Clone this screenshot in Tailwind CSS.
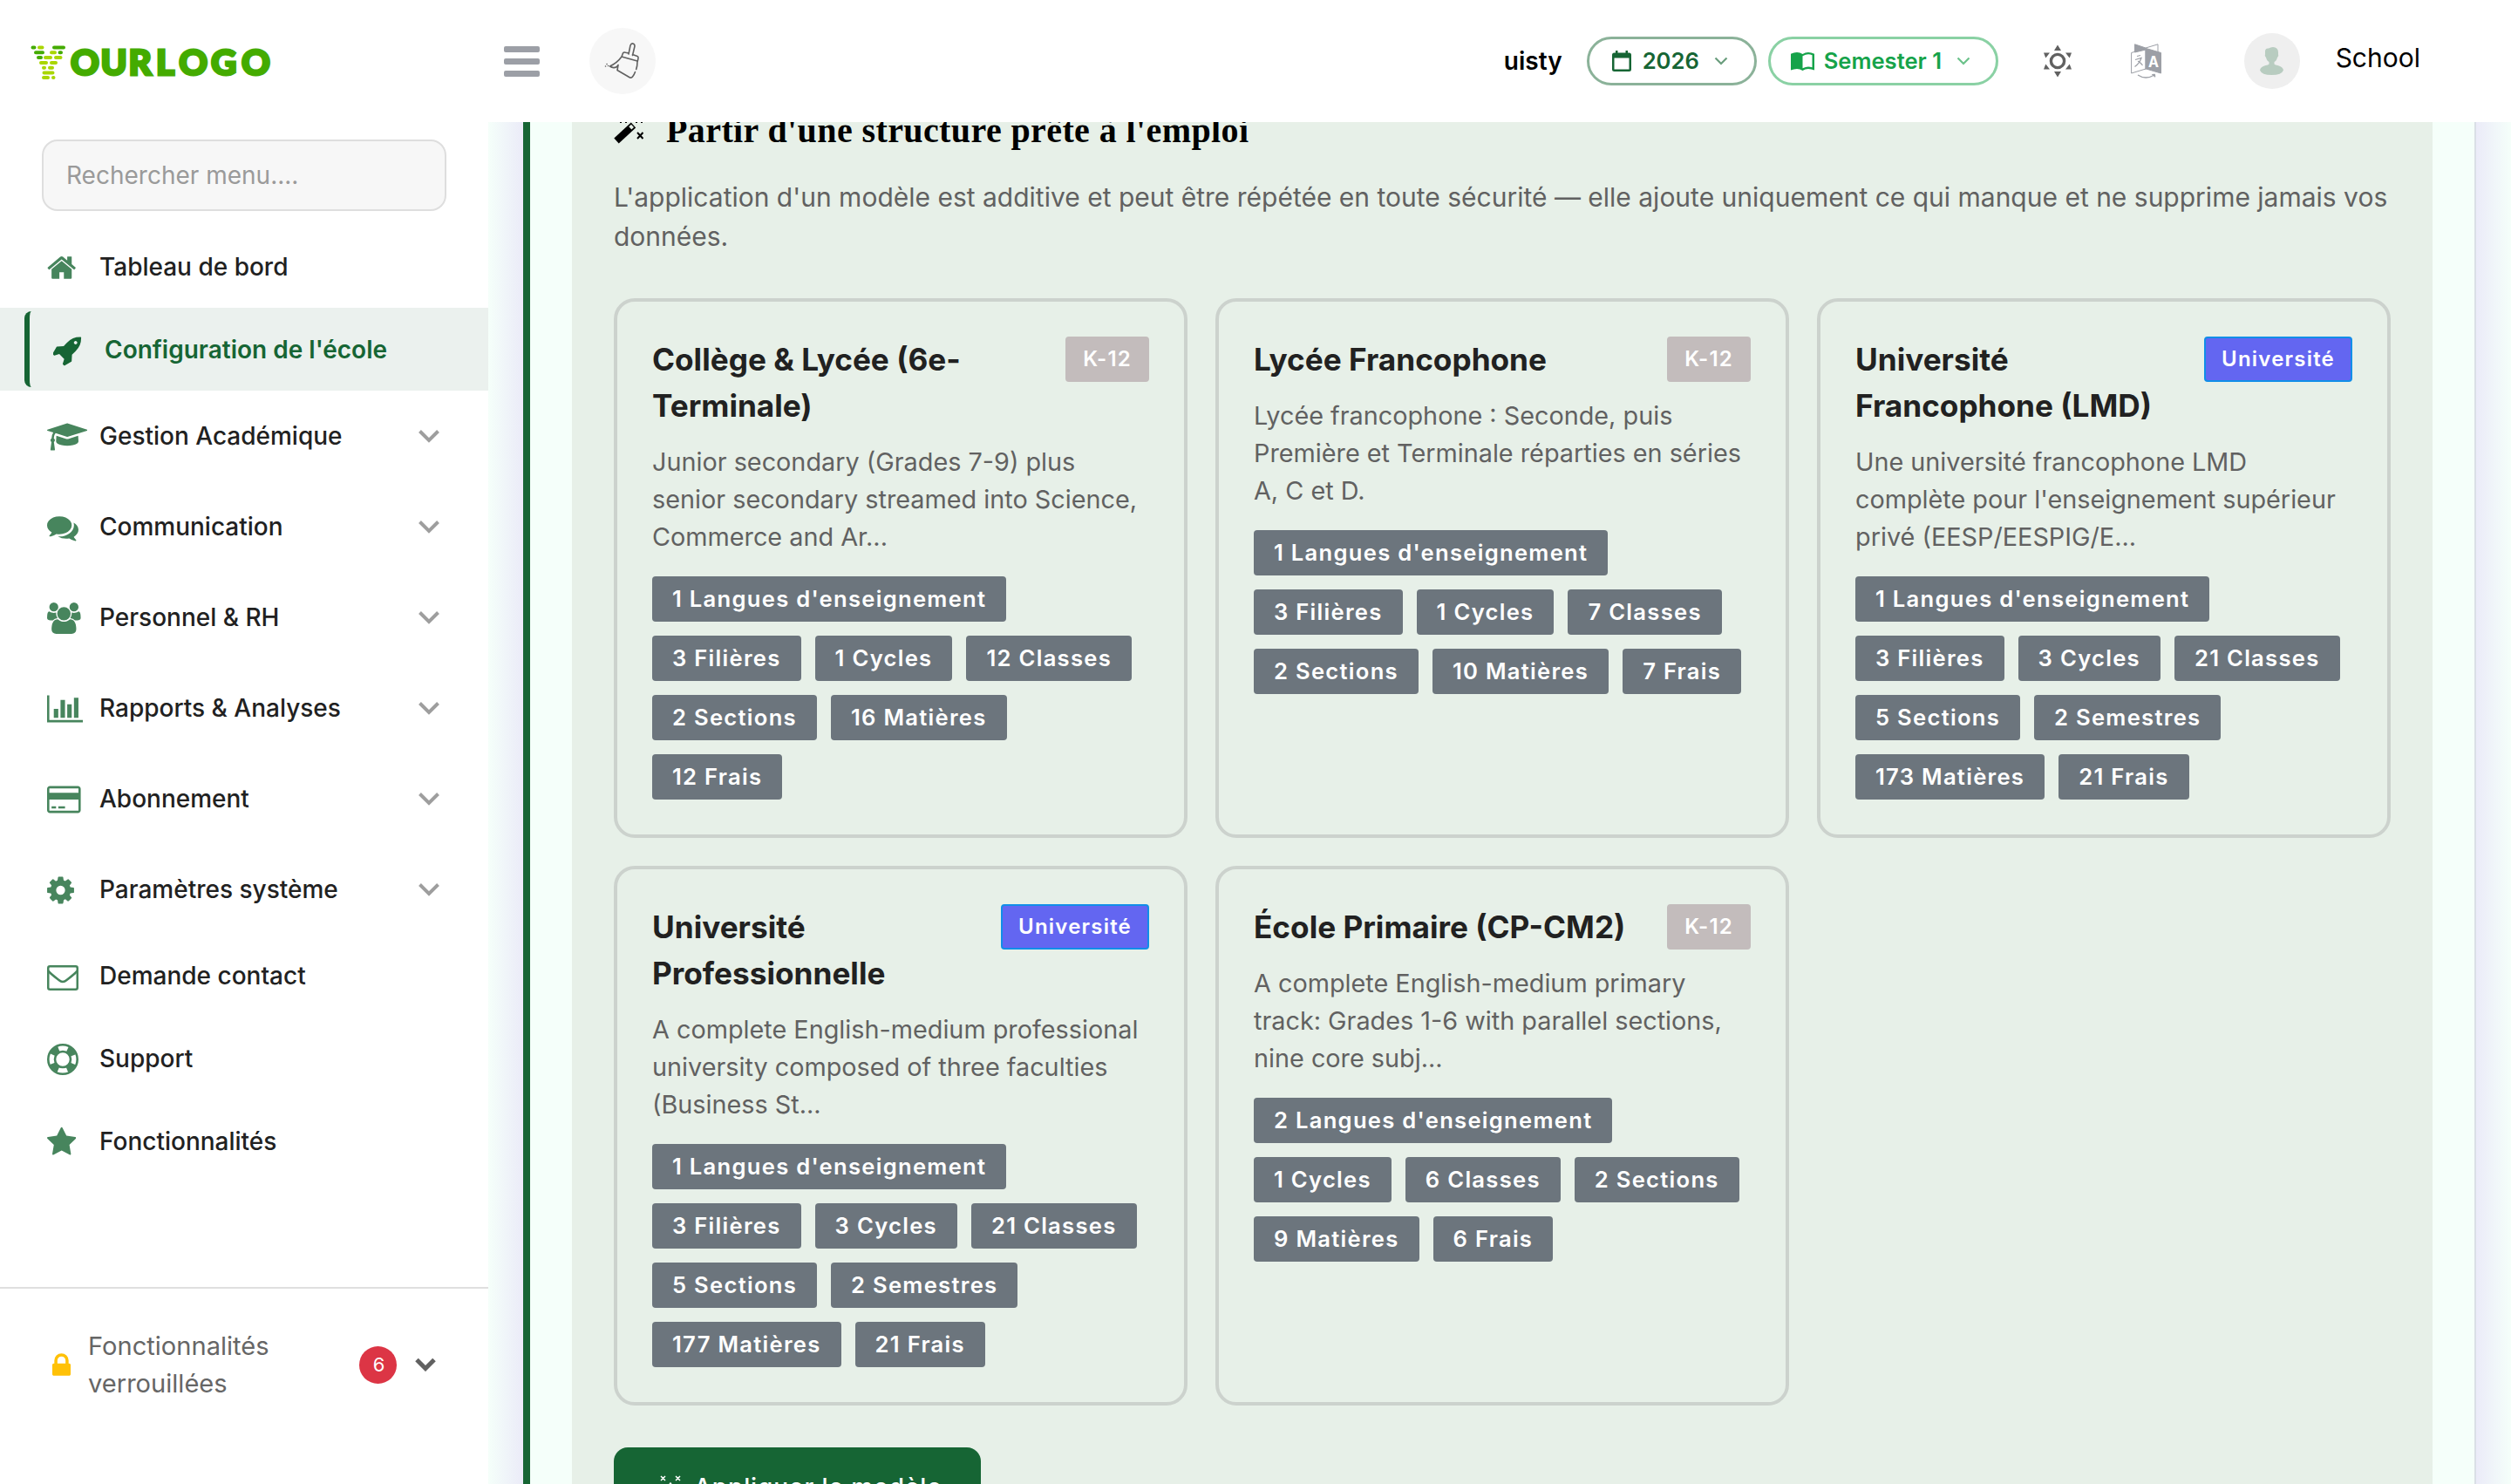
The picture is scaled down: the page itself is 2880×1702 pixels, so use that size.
<!DOCTYPE html>
<html lang="fr">

<head>
    <meta charset="UTF-8">
    <meta name="viewport" content="width=device-width, initial-scale=1.0">
    <title>Configuration de l'école</title>
    <script src="https://cdn.jsdelivr.net/npm/@tailwindcss/browser@4"></script>
</head>

<body class="h-[1702px] w-[2880px] overflow-hidden bg-[#f5fffa] font-['Inter',sans-serif] text-[28px] text-[#212121]">
    <!-- Header -->
    <header class="flex h-[140px] items-center bg-white">
        <div class="w-[578px] pl-[35px]">
            <svg class="block h-[44px] w-[280px]" viewBox="0 0 280 44">
                <g stroke-width="4" stroke-linecap="round" fill="none">
                    <path stroke="#44ab00" d="M2.500 6.500h2M27 6.500h11M6 12.200h8M33.500 12.200h1.500M9 18h3" />
                    <path stroke="#a9d600" d="M10 6.500h3.500M24 12.200h4M17 18h6M29 18h5.500M12 24h6M24 24h5M15 29.700h1M22 29.700h3M15.500 35.500h10M15 41h5M26 41h.5" />
                </g>
                <text x="46 80.500 112.500 144 170.300 207 242" y="38" font-family="Lato, sans-serif" font-weight="900" font-size="40.500" fill="#44ab00" stroke="#44ab00" stroke-width="3">OURLOGO</text>
            </svg>
        </div>
        <div class="flex h-[35px] w-[41px] flex-col justify-between">
            <span class="h-[7px] rounded-[2px] bg-[#9c9fa6]"></span>
            <span class="h-[7px] rounded-[2px] bg-[#9c9fa6]"></span>
            <span class="h-[7px] rounded-[2px] bg-[#9c9fa6]"></span>
        </div>
        <button class="ml-[57px] flex h-[76px] w-[76px] items-center justify-center rounded-full bg-[#f7f7f7]">
            <svg class="h-[44px] w-[42px]" viewBox="0 0 42 44" fill="none" stroke="#616161" stroke-width="1.600" stroke-linecap="round" stroke-linejoin="round">
                <path d="M28 14l2-10q1-2.500 3-2t2 3l-2.500 10.500M20 17l1.500-4q1-1.500 3-.8l3.500.9M32.500 14.500l5.500 2q1.500.7 1 2.500l-.8 3.500M20 17l18 5M20 17q-5 7-13.500 11 4 3 8 .5l1.500-2-1 6 14.500 8.500q2 .5 3-1 2-2.500 3-5.500M38 23q0 5-1.300 8.500M3 25.500h.1M1.500 28h.1M4.500 27.500h.1" />
            </svg>
        </button>
        <span class="ml-auto text-[28px] font-semibold text-black">uisty</span>
        <button class="ml-[28px] flex h-[56px] w-[195px] items-center rounded-full border-[3px] border-[#8bb299] pl-[26px] text-[25.600px] font-semibold text-[#166534]">
            <svg class="h-[24px] w-[22px]" viewBox="0 0 22 24" fill="#166534">
                <path d="M4 0h2.500v2.500h9V0H18v2.500h1.500Q22 2.500 22 5v16.500q0 2.500-2.500 2.500h-17Q0 24 0 21.500V5q0-2.500 2.500-2.500H4zM2.500 8.500v13h17v-13z" />
            </svg>
            <span class="ml-[13px]">2026</span>
            <svg class="ml-[17px] h-[10px] w-[16px]" viewBox="0 0 16 10" fill="none" stroke="#6a9d7d" stroke-width="2.200"><path d="M1.500 1.500L8 8l6.500-6.500" /></svg>
        </button>
        <button class="ml-[13px] flex h-[56px] w-[264px] items-center rounded-full border-[3px] border-[#8ad1a4] pl-[23px] text-[25.600px] font-semibold text-[#16a34a]">
            <svg class="h-[21px] w-[27px]" viewBox="0 0 27 21" fill="#16a34a">
                <path d="M13.500 2Q10.500 0 7 0T0 1.800V20.500Q3.500 19 7 19t6.500 2Q16.500 19 20 19t7 1.500V1.800Q23.500 0 20 0t-6.500 2zM24.500 3.300v13.900q-2.500-.7-4.500-.7-2.800 0-6.500 1.700V4.200q3.700-1.900 6.500-1.900 2.200 0 4.500 1z" />
            </svg>
            <span class="ml-[11px]">Semester 1</span>
            <svg class="ml-[17px] h-[10px] w-[16px]" viewBox="0 0 16 10" fill="none" stroke="#6bc28a" stroke-width="2.200"><path d="M1.500 1.500L8 8l6.500-6.500" /></svg>
        </button>
        <svg class="ml-[51px] h-[38px] w-[34px]" viewBox="0 0 34 38" fill="#616161">
            <circle cx="17" cy="19" r="7.600" fill="none" stroke="#616161" stroke-width="3.400" />
            <path d="M17 .5l4 6.500h-8zM17 37.500l4-6.500h-8zM1 9.500h7L3.300 15.500zM33 9.500h-7l4.700 6zM1 28.500h7l-4.700-6zM33 28.500h-7l4.700-6z" />
        </svg>
        <svg class="ml-[67px] h-[40px] w-[35px]" viewBox="0 0 35 40" stroke="#9c9fa6">
            <path d="M4.500.8L17 5v2L4.500 10z" fill="#9c9fa6" />
            <path d="M17 5L31 .8V10M17 5v25M.6 10.500L17 5.500V29L.6 34z" fill="none" />
            <path d="M17.500 5.500l17 5V34l-17-5z" fill="#9c9fa6" />
            <path d="M7 14.500l4-1M5 18.500l7-2q-2 6-7.500 10M8 20q3 1.500 5.500 5" fill="none" stroke-width="1.200" />
            <text x="20" y="26.500" font-family="Inter, sans-serif" font-weight="700" font-size="17" textLength="12" lengthAdjust="spacingAndGlyphs" fill="#fff" stroke="none">A</text>
            <path d="M8 36q9 6 19 0" fill="none" stroke-width="1.300" />
            <path d="M24.500 35.500l3-.3.300 3z" fill="#9c9fa6" />
        </svg>
        <span class="ml-[95px] flex h-[64px] w-[64px] items-center justify-center rounded-full bg-[#efefef]">
            <svg class="h-[32px] w-[27px]" viewBox="0 0 27 32" fill="#b8ccc0">
                <path d="M6 5q0-4 4-3.500 2-1.500 5-1.500 6 .5 6 6v2q1 2-1 4-1 4-3.500 5v2.500q1 1 4 1.500 6 1.500 6.500 5.500-2 5.500-13.500 5.500T0 26.500q.5-4 6.500-5.500 3-.5 4-1.500V17Q8 16 7 12q-2-2-1-4z" />
            </svg>
        </span>
        <span class="mr-[104px] ml-[41px] pb-[8px] text-[30px] text-black">School</span>
    </header>

    <div class="flex h-[1562px]">
        <!-- Sidebar -->
        <aside class="w-[560px] shrink-0 bg-white pt-[20px]">
            <div class="mx-[48px] flex h-[82px] items-center rounded-[18px] border-2 border-[#dedede] bg-[#f7f7f7] pl-[26px] text-[28px] text-[#9a9a9a]">Rechercher menu....</div>
            <nav class="mt-[17px] font-medium">
                <a class="flex h-[94px] items-center pl-[54px]">
                    <span class="w-[60px]"><svg class="mt-[2px] h-[36px] w-[33.400px]" viewBox="64 0 1664 1792" fill="#47855d"><path d="M1472 992v480q0 26-19 45t-45 19h-384v-384h-256v384h-384q-26 0-45-19t-19-45v-480q0-1 .5-3t.5-3l575-474 575 474q1 2 1 6zm223-69l-62 74q-8 9-21 11h-3q-13 0-21-7l-692-577-692 577q-12 8-24 7-13-2-21-11l-62-74q-8-10-7-23.500t11-21.500l719-599q32-26 76-26t76 26l244 204v-195q0-14 9-23t23-9h192q14 0 23 9t9 23v408l219 182q10 8 11 21.500t-7 23.500z" /></svg></span>
                    Tableau de bord
                </a>
                <a class="flex h-[95px] items-center bg-[#ebf1ee] pl-[28px] font-semibold text-[#166534]">
                    <span class="flex h-[87px] items-center rounded-l-[8px] border-l-[6px] border-[#166534] pl-[27px]">
                        <span class="w-[59px]"><svg class="mt-[2px] h-[36px] w-[33.400px]" viewBox="64 0 1664 1792" fill="#166534"><path d="M1440 448q0-40-28-68t-68-28-68 28-28 68 28 68 68 28 68-28 28-68zm224-288q0 249-75.500 430.500t-253.500 360.500q-81 80-195 176l-20 379q-2 16-16 26l-384 224q-7 4-16 4-12 0-23-9l-64-64q-13-14-8-32l85-276-281-281-276 85q-3 1-9 1-14 0-23-9l-64-64q-17-19-5-39l224-384q10-14 26-16l379-20q96-114 176-195 188-187 358-258t431-71q14 0 24 9.500t10 22.500z" /></svg></span>
                        Configuration de l'école
                    </span>
                </a>
                <a class="flex h-[104px] items-center pr-[56px] pl-[54px]">
                    <span class="w-[60px]"><svg class="mt-[2px] h-[36px] w-[46.300px]" viewBox="0 0 2304 1792" fill="#47855d"><path d="M1774 836l18 316q4 69-82 128t-235 93.500-323 34.500-323-34.500-235-93.500-82-128l18-316 574 181q22 7 48 7t48-7zm530-324q0 23-22 31l-1120 352q-4 1-10 1t-10-1l-652-206q-43 34-71 111.500t-34 178.500q63 36 63 109 0 69-58 107l58 433q2 14-8 25-9 11-24 11h-192q-15 0-24-11-10-11-8-25l58-433q-58-38-58-107 0-73 65-111 11-207 98-330l-333-104q-22-8-22-31t22-31l1120-352q4-1 10-1t10 1l1120 352q22 8 22 31z" /></svg></span>
                    Gestion Académique
                    <svg class="ml-auto h-[16px] w-[24px]" viewBox="0 0 24 16" fill="none" stroke="#9e9e9e" stroke-width="4"><path d="M1.500 2.500L12 13 22.500 2.500" /></svg>
                </a>
                <a class="flex h-[104px] items-center pr-[56px] pl-[54px]">
                    <span class="w-[60px]"><svg class="mt-[2px] h-[36px] w-[36px]" viewBox="0 0 1792 1792" fill="#47855d"><path d="M1408 768q0 139-94 257t-256.500 186.500-353.500 68.500q-86 0-176-16-124 88-278 128-36 9-86 16h-3q-11 0-20.500-8t-11.500-21q-1-3-1-6.500t.5-6.500 2-6l2.500-5t3.500-5.500 4-5 4.500-5 4-4.500q5-6 23-25t26-29.500 22.500-29 25-38.500 20.500-44q-124-72-195-177t-71-224q0-139 94-257t256.500-186.500 353.500-68.500 353.500 68.500 256.500 186.500 94 257zm384 256q0 120-71 224.500t-195 176.500q10 24 20.500 44t25 38.500 22.500 29 26 29.500 23 25q1 1 4 4.500t4.500 5 4 5 3.500 5.500l2.500 5t2 6 .5 6.500-1 6.500q-3 14-13 22t-22 7q-50-7-86-16-154-40-278-128-90 16-176 16-271 0-472-132 58 4 88 4 161 0 309-45t264-129q125-92 192-212t67-254q0-77-23-152 129 71 204 178t75 230z" /></svg></span>
                    Communication
                    <svg class="ml-auto h-[16px] w-[24px]" viewBox="0 0 24 16" fill="none" stroke="#9e9e9e" stroke-width="4"><path d="M1.500 2.500L12 13 22.500 2.500" /></svg>
                </a>
                <a class="flex h-[104px] items-center pr-[56px] pl-[54px]">
                    <span class="w-[60px]"><svg class="mt-[2px] h-[36px] w-[38.600px]" viewBox="-64 0 1920 1792" fill="#47855d"><path d="M529 896q-162 5-265 128h-134q-82 0-138-40.500t-56-118.500q0-353 124-353 6 0 43.500 21t97.500 42.500 119 21.500q67 0 133-23-5 37-5 66 0 139 81 256zm1071 637q0 120-73 189.500t-194 69.500h-874q-121 0-194-69.500t-73-189.500q0-53 3.500-103.500t14-109 26.500-108.500 43-97.500 62-81 85.500-53.500 111.500-20q10 0 43 21.500t73 48 107 48 135 21.500 135-21.500 107-48 73-48 43-21.500q61 0 111.500 20t85.500 53.500 62 81 43 97.500 26.500 108.500 14 109 3.500 103.500zm-1024-1277q0 106-75 181t-181 75-181-75-75-181 75-181 181-75 181 75 75 181zm704 384q0 159-112.500 271.500t-271.500 112.500-271.500-112.500-112.500-271.500 112.500-271.500 271.500-112.500 271.500 112.500 112.500 271.500zm576 225q0 78-56 118.500t-138 40.500h-134q-103-123-265-128 81-117 81-256 0-29-5-66 66 23 133 23 59 0 119-21.500t97.500-42.500 43.500-21q124 0 124 353zm-128-609q0 106-75 181t-181 75-181-75-75-181 75-181 181-75 181 75 75 181z" /></svg></span>
                    Personnel &amp; RH
                    <svg class="ml-auto h-[16px] w-[24px]" viewBox="0 0 24 16" fill="none" stroke="#9e9e9e" stroke-width="4"><path d="M1.500 2.500L12 13 22.500 2.500" /></svg>
                </a>
                <a class="flex h-[104px] items-center pr-[56px] pl-[54px]">
                    <span class="w-[60px]"><svg class="mt-[2px] h-[36px] w-[41.100px]" viewBox="0 0 2048 1792" fill="#47855d"><path d="M640 896v512H384V896zm384-512v1024H768V384zm1024 1152v128H0V128h128v1408zM1408 640v768h-256V640zm384-384v1152h-256V256z" /></svg></span>
                    Rapports &amp; Analyses
                    <svg class="ml-auto h-[16px] w-[24px]" viewBox="0 0 24 16" fill="none" stroke="#9e9e9e" stroke-width="4"><path d="M1.500 2.500L12 13 22.500 2.500" /></svg>
                </a>
                <a class="flex h-[104px] items-center pr-[56px] pl-[54px]">
                    <span class="w-[60px]"><svg class="mt-[2px] h-[36px] w-[38.600px]" viewBox="0 0 1920 1792" fill="#47855d"><path fill-rule="evenodd" d="M1760 128q66 0 113 47t47 113v1216q0 66-47 113t-113 47H160q-66 0-113-47T0 1504V288q0-66 47-113t113-47zM160 256q-13 0-22.500 9.500T128 288v224h1664V288q0-13-9.500-22.500T1760 256zm1600 1280q13 0 22.500-9.500t9.500-22.500V896H128v608q0 13 9.500 22.500t22.500 9.500zM256 1408v-128h256v128zm384 0v-128h384v128z" /></svg></span>
                    Abonnement
                    <svg class="ml-auto h-[16px] w-[24px]" viewBox="0 0 24 16" fill="none" stroke="#9e9e9e" stroke-width="4"><path d="M1.500 2.500L12 13 22.500 2.500" /></svg>
                </a>
                <a class="flex h-[104px] items-center pr-[56px] pl-[54px]">
                    <span class="w-[60px]"><svg class="mt-[2px] h-[36px] w-[31px]" viewBox="128 0 1536 1792" fill="#47855d"><path d="M1152 896q0-106-75-181t-181-75-181 75-75 181 75 181 181 75 181-75 75-181zm512-109v222q0 12-8 23t-20 13l-185 28q-19 54-39 91 35 50 107 138 10 12 10 25t-9 23q-27 37-99 108t-94 71q-12 0-26-9l-138-108q-44 23-91 38-16 136-29 186-7 28-36 28h-222q-14 0-24.500-8.500t-11.500-21.500l-28-184q-49-16-90-37l-141 107q-10 9-25 9-14 0-25-11-126-114-165-168-7-10-7-23 0-12 8-23 15-21 51-66.500t54-70.500q-27-50-41-99l-183-27q-13-2-21-12.500t-8-23.500v-222q0-12 8-23t19-13l186-28q14-46 39-92-40-57-107-138-10-12-10-24 0-10 9-23 26-36 98.500-107.500t94.500-71.500q13 0 26 10l138 107q44-23 91-38 16-136 29-186 7-28 36-28h222q14 0 24.500 8.500t11.500 21.500l28 184q49 16 90 37l142-107q9-9 24-9 13 0 25 10 129 119 165 170 7 8 7 22 0 12-8 23-15 21-51 66.500t-54 70.500q26 50 41 98l183 28q13 2 21 12.500t8 23.500z" /></svg></span>
                    Paramètres système
                    <svg class="ml-auto h-[16px] w-[24px]" viewBox="0 0 24 16" fill="none" stroke="#9e9e9e" stroke-width="4"><path d="M1.500 2.500L12 13 22.500 2.500" /></svg>
                </a>
                <a class="-mt-px flex h-[95px] items-center pl-[54px]">
                    <span class="w-[60px]"><svg class="mt-[5px] h-[29px] w-[36px]" viewBox="0 0 36 29" fill="none" stroke="#47855d" stroke-width="2.500"><rect x="1.250" y="1.250" width="33.500" height="26.500" rx="2" /><path d="M1.500 6.500Q3 9 13.500 17q4.500 4 9 0Q33 9 34.500 6.500" /></svg></span>
                    Demande contact
                </a>
                <a class="flex h-[95px] items-center pl-[54px]">
                    <span class="w-[60px]"><svg class="mt-[2px] h-[36px] w-[36px]" viewBox="0 0 36 36" fill="none" stroke="#47855d"><circle cx="18" cy="18" r="16.700" stroke-width="2.600" /><circle cx="18" cy="18" r="9" stroke-width="2.600" /><circle cx="18" cy="18" r="12.500" stroke-width="7" stroke-dasharray="9.500 10.135" stroke-dashoffset="-5.070" /></svg></span>
                    Support
                </a>
                <a class="flex h-[95px] items-center pl-[54px]">
                    <span class="w-[60px]"><svg class="mt-[2px] h-[36px] w-[33.400px]" viewBox="64 0 1664 1792" fill="#47855d"><path d="M1728 647q0 22-26 48l-363 354 86 500q1 7 1 20 0 21-10.500 35.500t-30.500 14.500q-19 0-40-12l-449-236-449 236q-22 12-40 12-21 0-31.500-14.500t-10.500-35.500q0-6 2-20l86-500-364-354q-25-27-25-48 0-37 56-46l502-73 225-455q19-41 49-41t49 41l225 455 502 73q56 9 56 46z" /></svg></span>
                    Fonctionnalités
                </a>
            </nav>
            <div class="mt-[120px] flex items-center border-t-2 border-[#dfdfdf] pt-[44px] pr-[60px] pl-[60px] text-[29.100px] leading-[43.200px] text-[#666]">
                <svg class="h-[26px] w-[21px]" viewBox="320 128 1152 1408" fill="#ffc107"><path d="M640 768h512v-192q0-106-75-181t-181-75-181 75-75 181v192zm832 96v576q0 40-28 68t-68 28h-960q-40 0-68-28t-28-68v-576q0-40 28-68t68-28h32v-192q0-184 132-316t316-132 316 132 132 316v192h32q40 0 68 28t28 68z" /></svg>
                <span class="ml-[20px] w-[240px]">Fonctionnalités verrouillées</span>
                <span class="ml-auto flex h-[43px] w-[43px] items-center justify-center rounded-full bg-[#dc3545] pl-[2px] text-[22px] text-white">6</span>
                <svg class="ml-[21px] h-[16px] w-[24px]" viewBox="0 0 24 16" fill="none" stroke="#616161" stroke-width="5"><path d="M2 2.500L12 12.500 22 2.500" /></svg>
            </div>
        </aside>

        <!-- Content -->
        <div class="w-[40px] shrink-0 bg-linear-to-r from-[#f5fffa] to-[#ebebf8]"></div>
        <main class="w-[2240px] shrink-0 overflow-hidden border-r-2 border-l-8 border-r-[#dadfe6] border-l-[#166534] bg-[#f5fffa] px-[48px]">
            <section class="h-full w-[2134px] bg-[#e7f0e8] px-[48px]">
                <div class="flex h-[64px] items-start">
                    <svg class="-mt-[3px] h-[28px] w-[34px] shrink-0" viewBox="0 0 34 28">
                        <path d="M3 24.500L22.500 6.500" stroke="#000" stroke-width="8" />
                        <path d="M18.800 9.900L21.500 7.400" stroke="#e7f0e8" stroke-width="4.500" />
                        <path d="M27 15l6.500 7M33.500 15L27 22" stroke="#000" stroke-width="2" />
                        <path d="M7 3.500h2M13 3.500h2M25 3.500h2M31 3.500h2" stroke="#000" />
                    </svg>
                    <h2 class="-mt-[14px] ml-[26px] font-['Liberation_Serif',serif] text-[40px] leading-[48px] font-bold tracking-[0.400px] text-black">Partir d'une structure prête à l'emploi</h2>
                </div>
                <p class="text-[30px] leading-[45px] text-[#616161]">L'application d'un modèle est additive et peut être répétée en toute sécurité — elle ajoute uniquement ce qui manque et ne supprime jamais vos données.</p>
                <div id="templates" class="mt-[48px] grid grid-cols-3 gap-[32px]"></div>
                <button class="mt-[48px] flex h-[92px] w-[421px] items-center rounded-[16px] bg-[#166534] pl-[52px] text-[28px] font-medium tracking-[0.900px] text-white">
                    <svg class="h-[28px] w-[28px]" viewBox="0 0 28 28" stroke="#fff" fill="none" stroke-width="1.500"><path d="M2 1l5 5M7 1L2 6M19 1l5 5M24 1l-5 5M10 13l3-4 3 4M12 11L2 25" /></svg>
                    <span class="ml-[12px]">Appliquer le modèle</span>
                </button>
            </section>
        </main>
        <div class="w-[40px] shrink-0 bg-linear-to-r from-[#ebebf8] to-[#f5fffa]"></div>
    </div>

    <script>
        const templates = [
            { title: "Collège & Lycée (6e-Terminale)", type: "K-12", text: "Junior secondary (Grades 7-9) plus senior secondary streamed into Science, Commerce and Ar...", stats: ["1 Langues d'enseignement", "3 Filières", "1 Cycles", "12 Classes", "2 Sections", "16 Matières", "12 Frais"] },
            { title: "Lycée Francophone", type: "K-12", text: "Lycée francophone : Seconde, puis Première et Terminale réparties en séries A, C et D.", stats: ["1 Langues d'enseignement", "3 Filières", "1 Cycles", "7 Classes", "2 Sections", "10 Matières", "7 Frais"] },
            { title: "Université Francophone (LMD)", type: "Université", text: "Une université francophone LMD complète pour l'enseignement supérieur privé (EESP/EESPIG/E...", stats: ["1 Langues d'enseignement", "3 Filières", "3 Cycles", "21 Classes", "5 Sections", "2 Semestres", "173 Matières", "21 Frais"] },
            { title: "Université Professionnelle", type: "Université", text: "A complete English-medium professional university composed of three faculties (Business St...", stats: ["1 Langues d'enseignement", "3 Filières", "3 Cycles", "21 Classes", "5 Sections", "2 Semestres", "177 Matières", "21 Frais"] },
            { title: "École Primaire (CP-CM2)", type: "K-12", text: "A complete English-medium primary track: Grades 1-6 with parallel sections, nine core subj...", stats: ["2 Langues d'enseignement", "1 Cycles", "6 Classes", "2 Sections", "9 Matières", "6 Frais"] }
        ];

        document.getElementById('templates').innerHTML = templates.map(t => `
            <div class="h-[619px] rounded-[24px] border-4 border-[#ccd2cd] p-[40px]">
                <div class="flex items-start justify-between">
                    <h3 class="max-w-[440px] text-[35.2px] leading-[52.8px] font-bold">${t.title}</h3>
                    <span class="${t.type === 'K-12' ? 'border-[#c3bcbc] bg-[#c3bcbc]' : 'border-[#118ee8] bg-[#6366f1]'} flex h-[52px] shrink-0 items-center rounded-[4px] border-2 px-[18px] text-[24px] font-semibold tracking-[1.2px] text-white">${t.type}</span>
                </div>
                <p class="mt-[16px] text-[28.8px] leading-[43.2px] text-[#616161]">${t.text}</p>
                <div class="mt-[24px] flex flex-wrap gap-[16px]">
                    ${t.stats.map(s => `<span class="flex h-[52px] items-center rounded-[4px] bg-[#6c757d] px-[23px] text-[25.6px] font-semibold tracking-[1.28px] text-white">${s}</span>`).join('')}
                </div>
            </div>`).join('');
    </script>
</body>

</html>
